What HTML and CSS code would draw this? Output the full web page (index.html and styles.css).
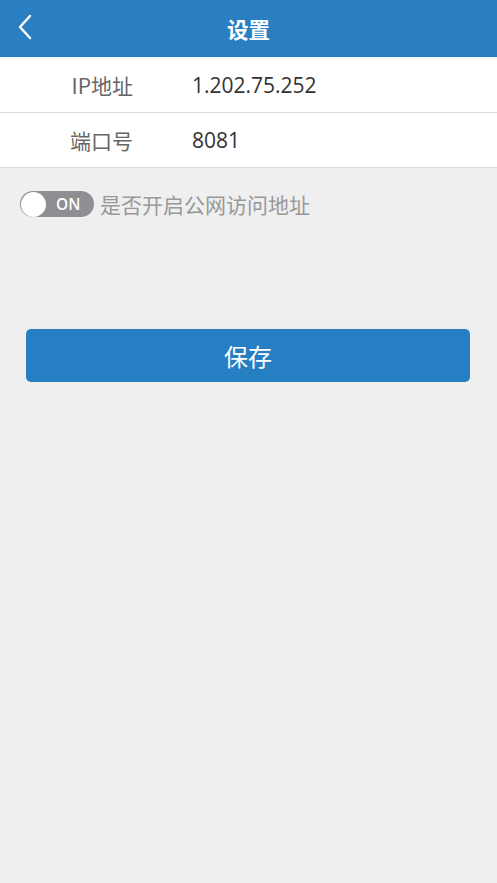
FILE: index.html
```html
<!DOCTYPE html>
<html lang="zh-CN">
<head>
<meta charset="utf-8">
<title>设置</title>
<link rel="stylesheet" href="styles.css">
</head>
<body>
<header class="topbar">
  <span class="back">
    <svg width="16" height="26" viewBox="0 0 16 26"><path d="M13 2 L3 13 L13 24" fill="none" stroke="#fff" stroke-width="2.4" stroke-linecap="round" stroke-linejoin="round"/></svg>
  </span>
  <h1 class="title">设置</h1>
</header>
<section class="form">
  <div class="row">
    <span class="label">IP地址</span>
    <span class="value">1.202.75.252</span>
  </div>
  <div class="row">
    <span class="label">端口号</span>
    <span class="value">8081</span>
  </div>
</section>
<div class="switch-row">
  <span class="switch"><span class="knob"></span><span class="on">ON</span></span>
  <span class="switch-label">是否开启公网访问地址</span>
</div>
<div class="actions">
  <button class="save">保存</button>
</div>
</body>
</html>
```
FILE: styles.css
```css
html, body {
  margin: 0;
  padding: 0;
  height: 100%;
}
body {
  background: #efefef;
  font-family: "Noto Sans CJK SC", "Noto Sans", sans-serif;
}
.topbar {
  height: 57px;
  background: #2a7fc2;
  display: flex;
  align-items: center;
  justify-content: center;
  position: relative;
}
.back {
  position: absolute;
  left: 17px;
  top: 14px;
  display: flex;
}
.title {
  margin: 0;
  color: #fff;
  font-size: 21.5px;
  font-weight: bold;
  line-height: 1;
}
.form {
  background: #fff;
  border-bottom: 1px solid #dedede;
}
.row {
  height: 54px;
  display: flex;
  align-items: center;
  border-top: 1px solid #fff;
}
.row + .row {
  border-top: 1px solid #dedede;
}
.label {
  width: 133px;
  margin-right: 59px;
  text-align: right;
  color: #666;
  font-size: 21px;
  white-space: nowrap;
}
.value {
  color: #333;
  font-size: 21px;
  font-family: "Open Sans", "Noto Sans", sans-serif;
}
.switch-row {
  display: flex;
  align-items: center;
  padding: 21px 0 0 20px;
  gap: 6px;
}
.switch {
  width: 74px;
  height: 26px;
  border-radius: 13px;
  background: #8e8e93;
  display: flex;
  align-items: center;
  flex-shrink: 0;
}
.knob {
  width: 25px;
  height: 25px;
  border-radius: 50%;
  background: #fff;
  margin-left: 1px;
}
.on {
  color: #fff;
  font-family: "Open Sans", "Noto Sans", sans-serif;
  font-size: 15.5px;
  font-weight: 600;
  margin-left: 10px;
}
.switch-label {
  color: #999;
  font-size: 21px;
  white-space: nowrap;
}
.actions {
  padding: 110px 27px 0 26px;
}
.save {
  width: 100%;
  height: 53px;
  border: none;
  border-radius: 5px;
  background: #267fc3;
  color: #fff;
  font-size: 24px;
  font-family: "Noto Sans CJK SC", sans-serif;
}
```
